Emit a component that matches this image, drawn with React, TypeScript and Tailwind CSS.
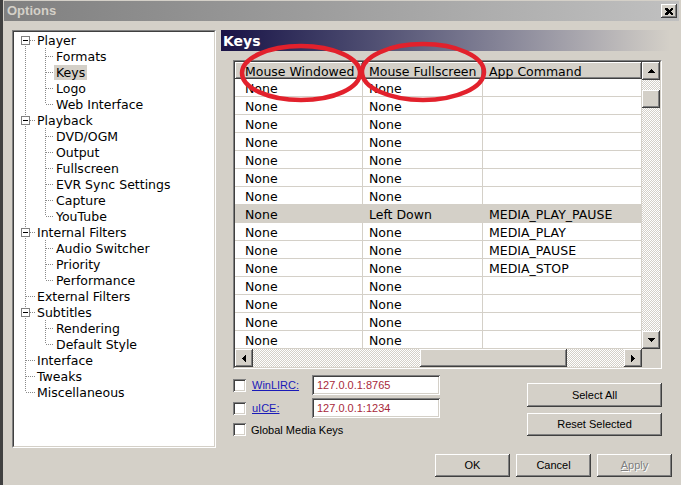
import React from 'react';

type Item = { t: string; l: 1 | 2; box?: boolean; last?: boolean; sel?: boolean };

const items: Item[] = [
  { t: 'Player', l: 1, box: true },
  { t: 'Formats', l: 2 },
  { t: 'Keys', l: 2, sel: true },
  { t: 'Logo', l: 2 },
  { t: 'Web Interface', l: 2, last: true },
  { t: 'Playback', l: 1, box: true },
  { t: 'DVD/OGM', l: 2 },
  { t: 'Output', l: 2 },
  { t: 'Fullscreen', l: 2 },
  { t: 'EVR Sync Settings', l: 2 },
  { t: 'Capture', l: 2 },
  { t: 'YouTube', l: 2, last: true },
  { t: 'Internal Filters', l: 1, box: true },
  { t: 'Audio Switcher', l: 2 },
  { t: 'Priority', l: 2 },
  { t: 'Performance', l: 2, last: true },
  { t: 'External Filters', l: 1 },
  { t: 'Subtitles', l: 1, box: true },
  { t: 'Rendering', l: 2 },
  { t: 'Default Style', l: 2, last: true },
  { t: 'Interface', l: 1 },
  { t: 'Tweaks', l: 1 },
  { t: 'Miscellaneous', l: 1 },
];

const rows: string[][] = [
  ['None', 'None', ''],
  ['None', 'None', ''],
  ['None', 'None', ''],
  ['None', 'None', ''],
  ['None', 'None', ''],
  ['None', 'None', ''],
  ['None', 'None', ''],
  ['None', 'Left Down', 'MEDIA_PLAY_PAUSE'],
  ['None', 'None', 'MEDIA_PLAY'],
  ['None', 'None', 'MEDIA_PAUSE'],
  ['None', 'None', 'MEDIA_STOP'],
  ['None', 'None', ''],
  ['None', 'None', ''],
  ['None', 'None', ''],
  ['None', 'None', ''],
];

const colCls = ['w-[128px] pl-[10px]', 'w-[120px] pl-[6px]', 'w-[159px] pl-[6px]'];

const raised =
  'bg-[#d4d0c8] shadow-[inset_-1px_-1px_#404040,inset_1px_1px_#ffffff,inset_-2px_-2px_#808080,inset_2px_2px_#d4d0c8]';
const sunken =
  'bg-white shadow-[inset_1px_1px_#808080,inset_-1px_-1px_#ffffff,inset_2px_2px_#404040,inset_-2px_-2px_#d4d0c8]';
const checker =
  'bg-[repeating-conic-gradient(#d4d0c8_0%_25%,#ffffff_0%_50%)] bg-[length:2px_2px]';

function TreeRow({ it, i }: { it: Item; i: number }) {
  const isFirst = i === 0;
  const isLast = it.t === 'Miscellaneous';
  return (
    <div className="flex h-[16px] items-center">
      <svg width="20" height="16" className="shrink-0" shapeRendering="crispEdges">
        <line x1="10.5" y1={isFirst ? 8 : 0} x2="10.5" y2={isLast ? 8 : 16} stroke="#8a8a8a" strokeDasharray="1 1" />
        {it.l === 1 && (
          <line x1={it.box ? 15 : 11} y1="8.5" x2="20" y2="8.5" stroke="#8a8a8a" strokeDasharray="1 1" />
        )}
        {it.box && (
          <>
            <rect x="6.5" y="4.5" width="8" height="8" fill="#ffffff" stroke="#808080" />
            <line x1="8" y1="8.5" x2="13" y2="8.5" stroke="#000000" />
          </>
        )}
      </svg>
      {it.l === 2 && (
        <svg width="19" height="16" className="shrink-0" shapeRendering="crispEdges">
          <line x1="10.5" y1="0" x2="10.5" y2={it.last ? 8 : 16} stroke="#8a8a8a" strokeDasharray="1 1" />
          <line x1="11" y1="8.5" x2="19" y2="8.5" stroke="#8a8a8a" strokeDasharray="1 1" />
        </svg>
      )}
      <span className={`px-[2px] leading-[15px] whitespace-nowrap ${it.sel ? 'bg-[#d4d0c8]' : ''}`}>{it.t}</span>
    </div>
  );
}

function Arrow({ dir }: { dir: 'up' | 'down' | 'left' | 'right' }) {
  if (dir === 'up')
    return (
      <svg width="7" height="4" shapeRendering="crispEdges">
        <polygon points="0,4 7,4 3.5,0" fill="#000" />
      </svg>
    );
  if (dir === 'down')
    return (
      <svg width="7" height="4" shapeRendering="crispEdges">
        <polygon points="0,0 7,0 3.5,4" fill="#000" />
      </svg>
    );
  if (dir === 'left')
    return (
      <svg width="4" height="7" shapeRendering="crispEdges">
        <polygon points="4,0 4,7 0,3.5" fill="#000" />
      </svg>
    );
  return (
    <svg width="4" height="7" shapeRendering="crispEdges">
      <polygon points="0,0 0,7 4,3.5" fill="#000" />
    </svg>
  );
}

function Button({ label, w, h, disabled }: { label: React.ReactNode; w: string; h: string; disabled?: boolean }) {
  return (
    <div
      className={`${w} ${h} ${raised} flex items-center justify-center font-['Liberation_Sans',Arial,sans-serif] text-[11px] ${
        disabled ? 'text-[#808080] [text-shadow:1px_1px_0_#ffffff]' : 'text-black'
      }`}
    >
      {label}
    </div>
  );
}

function Checkbox() {
  return <div className={`w-[13px] h-[13px] shrink-0 ${sunken}`} />;
}

function KeysTable() {
  return (
    <div className="w-[429px] h-[309px] border border-t-[#808080] border-l-[#808080] border-b-white border-r-white">
      <div className="w-full h-full border border-t-[#404040] border-l-[#404040] border-b-[#d4d0c8] border-r-[#d4d0c8] flex flex-col">
        <div className="flex h-[287px]">
          <div className="w-[407px] h-[287px] overflow-hidden flex flex-col text-[12.5px]">
            <div className="flex h-[17px] shrink-0 bg-[#d4d0c8]">
              {['Mouse Windowed', 'Mouse Fullscreen', 'App Command'].map((h, i) => (
                <div
                  key={h}
                  className={`${colCls[i]} h-full flex items-center pt-[3px] whitespace-nowrap overflow-hidden shadow-[inset_-1px_-1px_#404040,inset_1px_1px_#ffffff,inset_-2px_-2px_#808080]`}
                >
                  {h}
                </div>
              ))}
            </div>
            {rows.map((r, ri) => (
              <div
                key={ri}
                className={`flex h-[18px] shrink-0 border-b border-[#d4d0c8] ${ri === 7 ? 'bg-[#d4d0c8]' : 'bg-white'}`}
              >
                {r.map((c, ci) => (
                  <div
                    key={ci}
                    className={`${colCls[ci]} h-full flex items-center pt-[3px] whitespace-nowrap overflow-hidden border-r border-[#d4d0c8]`}
                  >
                    {c}
                  </div>
                ))}
              </div>
            ))}
          </div>
          <div className={`w-[18px] h-[287px] flex flex-col ${checker}`}>
            <div className={`h-[18px] shrink-0 ${raised} flex items-center justify-center`}>
              <Arrow dir="up" />
            </div>
            <div className={`mt-[10px] h-[18px] shrink-0 ${raised}`} />
            <div className="flex-1" />
            <div className={`h-[18px] shrink-0 ${raised} flex items-center justify-center`}>
              <Arrow dir="down" />
            </div>
          </div>
        </div>
        <div className="flex h-[18px]">
          <div className={`w-[407px] h-[18px] flex ${checker}`}>
            <div className={`w-[18px] h-full shrink-0 ${raised} flex items-center justify-center`}>
              <Arrow dir="left" />
            </div>
            <div className={`ml-[167px] w-[147px] h-full shrink-0 ${raised}`} />
            <div className="flex-1" />
            <div className={`w-[18px] h-full shrink-0 ${raised} flex items-center justify-center`}>
              <Arrow dir="right" />
            </div>
          </div>
          <div className="w-[18px] h-[18px] bg-[#d4d0c8]" />
        </div>
      </div>
    </div>
  );
}

export default function App() {
  return (
    <div className="relative w-[681px] h-[485px] overflow-hidden bg-[#d4d0c8] flex font-['DejaVu_Sans',sans-serif] text-black">
      <div className="w-[3px] h-full bg-[#404040] shrink-0" />
      <div className="flex-1 flex flex-col">
        {/* Title bar */}
        <div className="mt-[1px] ml-[1px] mr-[2px] h-[20px] flex items-center justify-between bg-linear-to-r from-[#808080] to-[#c0c0c0] pl-[3px] pr-[2px]">
          <span className="font-['Liberation_Sans',Arial,sans-serif] font-bold text-[13px] text-[#d4d0c8]">Options</span>
          <div className={`w-[16px] h-[14px] ${raised} flex items-center justify-center`}>
            <svg width="8" height="7" shapeRendering="crispEdges">
              <path d="M0 0h2l2 2 2-2h2v1l-2 2.5 2 2.5v1h-2l-2-2-2 2h-2v-1l2-2.5-2-2.5z" fill="#000" />
            </svg>
          </div>
        </div>

        {/* Body */}
        <div className="flex mt-[9px]">
          {/* Tree */}
          <div className="ml-[9px] w-[204px] h-[418px] shrink-0 border border-t-[#808080] border-l-[#808080] border-b-white border-r-white">
            <div className="w-full h-full bg-white border border-t-[#404040] border-l-[#404040] border-b-[#d4d0c8] border-r-[#d4d0c8] pl-[1px] text-[12.5px]">
              {items.map((it, i) => (
                <TreeRow key={it.t} it={it} i={i} />
              ))}
            </div>
          </div>

          {/* Right pane */}
          <div className="ml-[5px] w-[449px] flex flex-col">
            <div className="h-[21px] bg-linear-to-r from-[#1a1246] to-[#d4d0c8] flex items-center pl-[2px] pt-[1px]">
              <span className="font-bold text-[14px] text-white">Keys</span>
            </div>
            <div className="mt-[9px] ml-[12px]">
              <KeysTable />
            </div>
            <div className="mt-[6px] ml-[12px] w-[429px] flex justify-between font-['Liberation_Sans',Arial,sans-serif] text-[11px]">
              <div className="flex flex-col">
                <div className="flex items-center h-[20px]">
                  <Checkbox />
                  <span className="ml-[6px] w-[60px] text-[#1a1ab8] underline">WinLIRC:</span>
                  <div className={`w-[128px] h-[20px] ${sunken} flex items-center pl-[5px] text-[#a8283a]`}>127.0.0.1:8765</div>
                </div>
                <div className="flex items-center h-[20px] mt-[3px]">
                  <Checkbox />
                  <span className="ml-[6px] w-[60px] text-[#1a1ab8] underline">uICE:</span>
                  <div className={`w-[128px] h-[20px] ${sunken} flex items-center pl-[5px] text-[#a8283a]`}>127.0.0.1:1234</div>
                </div>
                <div className="flex items-center h-[13px] mt-[5px]">
                  <Checkbox />
                  <span className="ml-[5px] pt-[1px]">Global Media Keys</span>
                </div>
              </div>
              <div className="flex flex-col pt-[8px] gap-[6px]">
                <Button label="Select All" w="w-[135px]" h="h-[24px]" />
                <Button label="Reset Selected" w="w-[135px]" h="h-[23px]" />
              </div>
            </div>
          </div>
        </div>

        {/* Footer */}
        <div className="mt-[6px] flex justify-end gap-[6px] pr-[9px]">
          <Button label="OK" w="w-[75px]" h="h-[23px]" />
          <Button label="Cancel" w="w-[75px]" h="h-[23px]" />
          <Button
            label={
              <span>
                <span className="underline">A</span>pply
              </span>
            }
            w="w-[75px]"
            h="h-[23px]"
            disabled
          />
        </div>
      </div>

      {/* Red annotation ellipses */}
      <svg className="absolute left-0 top-0 pointer-events-none" width="681" height="485">
        <ellipse cx="301" cy="73" rx="59" ry="27" fill="none" stroke="#e2212c" strokeWidth="4.5" />
        <ellipse cx="423" cy="72" rx="61" ry="28" fill="none" stroke="#e2212c" strokeWidth="4.5" />
      </svg>
    </div>
  );
}
